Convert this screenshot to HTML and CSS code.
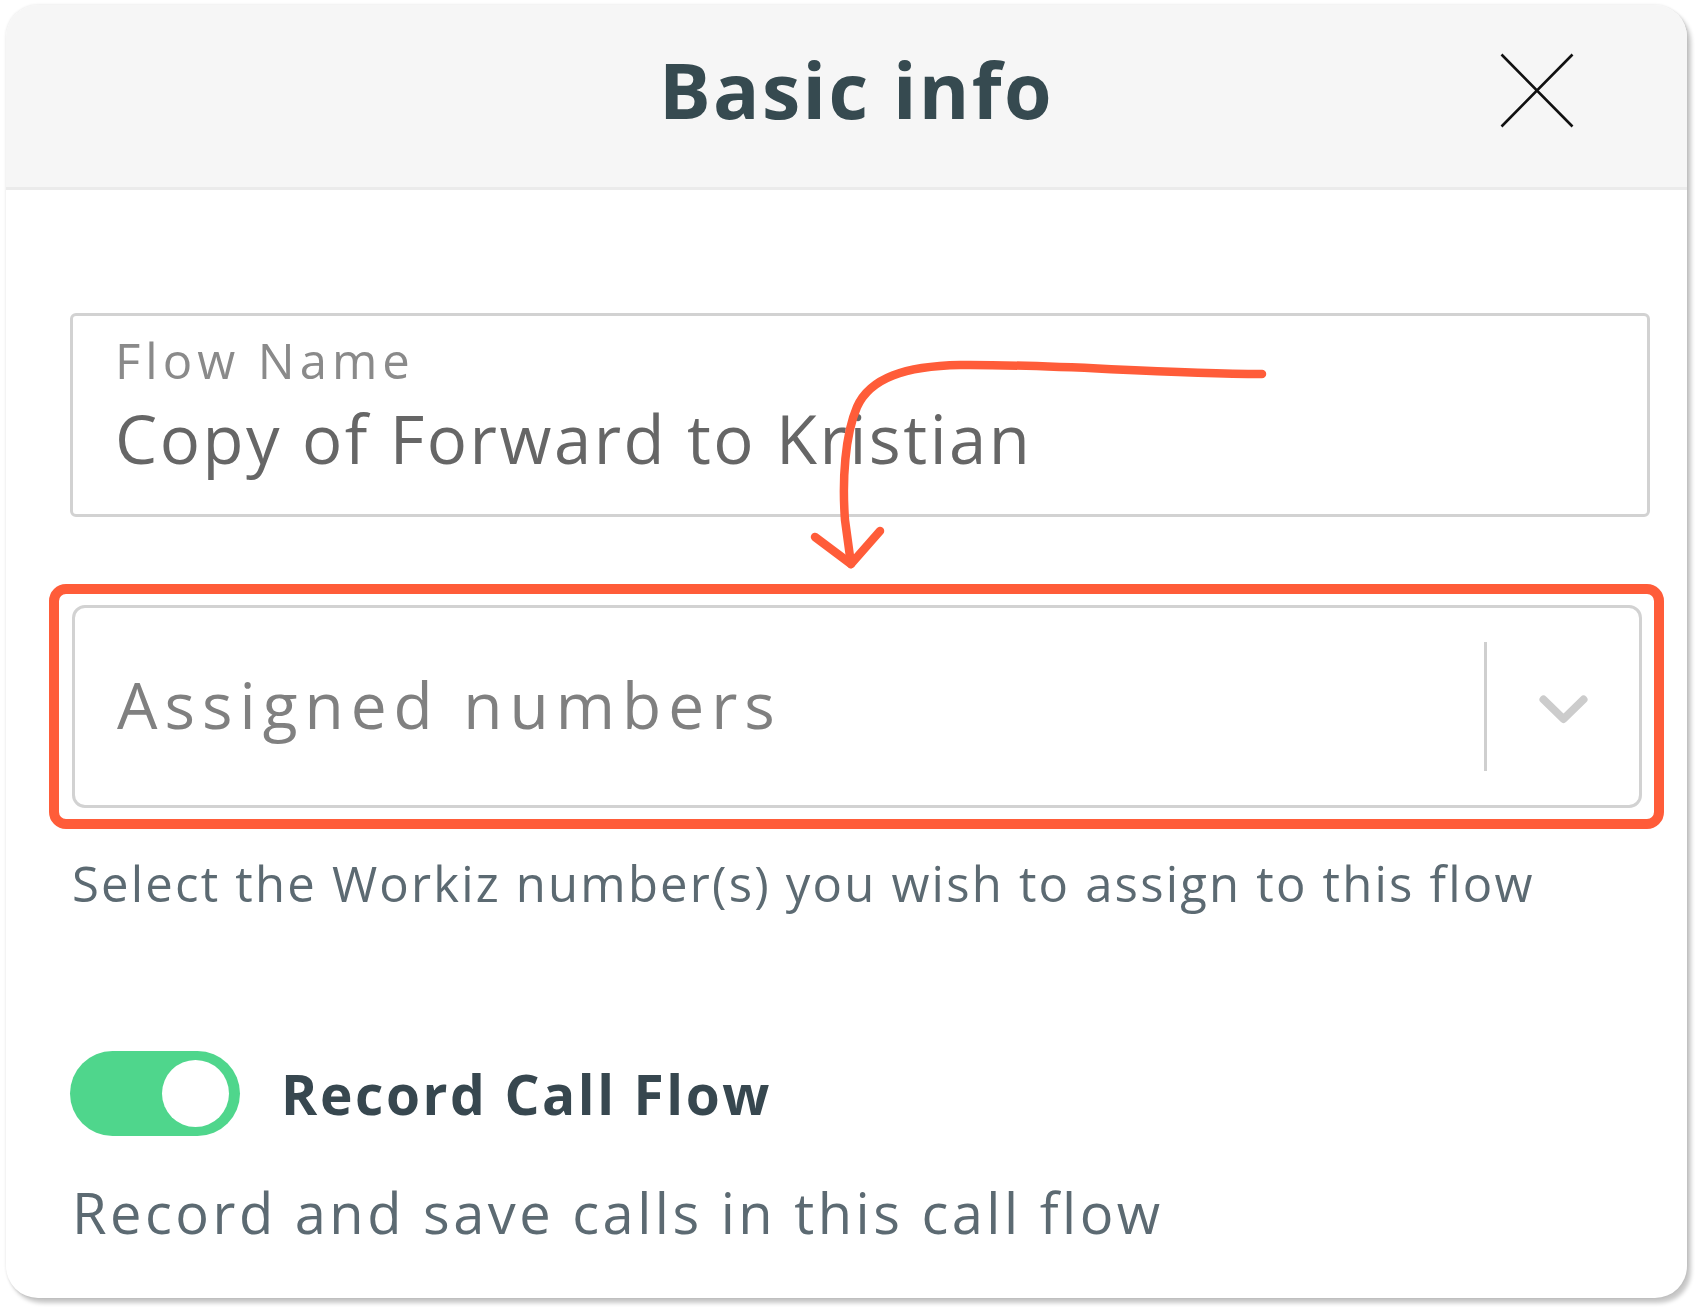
FILE: index.html
```html
<!DOCTYPE html>
<html lang="en">
<head>
<meta charset="utf-8">
<title>Basic info</title>
<link rel="stylesheet" href="styles.css">
</head>
<body>
<div class="card">
  <div class="header">
    <div class="spacer"></div>
    <h1 class="title">Basic info</h1>
    <button class="close" aria-label="Close">
      <svg width="74" height="75" viewBox="0 0 74 75"><path d="M1.5 1.5 L72.5 73.5 M72.5 1.5 L1.5 73.5" stroke="#111" stroke-width="2.6" fill="none"/></svg>
    </button>
  </div>
  <div class="body">
    <div class="field">
      <div class="field-label">Flow Name</div>
      <div class="field-value">Copy of Forward to Kristian</div>
    </div>
    <div class="highlight">
      <div class="select">
        <div class="placeholder">Assigned numbers</div>
        <div class="sep"></div>
        <div class="indicator">
          <svg width="49" height="29" viewBox="0 0 49 29"><path d="M4.5 4.5 L24.5 24 L44.5 4.5" stroke="#cccccc" stroke-width="8" fill="none" stroke-linecap="round" stroke-linejoin="round"/></svg>
        </div>
      </div>
    </div>
    <p class="helper">Select the Workiz number(s) you wish to assign to this flow</p>
    <div class="toggle-row">
      <div class="toggle"><div class="knob"></div></div>
      <div class="toggle-label">Record Call Flow</div>
    </div>
    <p class="desc">Record and save calls in this call flow</p>
  </div>
</div>
<svg class="arrow" width="1700" height="1313" viewBox="0 0 1700 1313">
  <path d="M1262 374 C1150 373 1050 364 960 365 C905 366 870 378 857 407 C845 435 842 480 845 520 L851 564" stroke="#ff5c39" stroke-width="8.5" fill="none" stroke-linecap="round" stroke-linejoin="round"/>
  <path d="M815 537 L851 564 L880 531" stroke="#ff5c39" stroke-width="8.5" fill="none" stroke-linecap="round" stroke-linejoin="round"/>
</svg>
</body>
</html>
```
FILE: styles.css
```css
html, body {
  margin: 0;
  padding: 0;
  background: #ffffff;
}
body {
  width: 1700px;
  height: 1313px;
  position: relative;
  overflow: hidden;
  font-family: "Open Sans", "Liberation Sans", sans-serif;
}
.card {
  margin: 5px 0 0 6px;
  width: 1681px;
  height: 1293px;
  box-sizing: border-box;
  background: #ffffff;
  border-radius: 32px;
  overflow: hidden;
  box-shadow: 4px 5px 4px rgba(0,0,0,0.22), 0 0 3px rgba(0,0,0,0.12);
}
.header {
  height: 185px;
  box-sizing: border-box;
  background: #f6f6f6;
  border-bottom: 3px solid #ebebeb;
  display: grid;
  grid-template-columns: 1fr auto 1fr;
  align-items: center;
  padding: 0 0 14px 20px;
}
.title {
  margin: 0;
  font-size: 77px;
  line-height: 1;
  font-weight: 700;
  letter-spacing: 2.4px;
  color: #364a50;
}
.close {
  justify-self: end;
  margin-right: 113px;
  margin-top: 2px;
  padding: 0;
  border: 0;
  background: transparent;
  display: block;
  line-height: 0;
}
.body {
  padding: 123px 37px 0 64px;
}
.field {
  height: 204px;
  box-sizing: border-box;
  border: 3px solid #d2d2d2;
  border-radius: 6px;
  padding: 20px 42px 0;
}
.field-label {
  font-size: 49px;
  line-height: 1;
  letter-spacing: 5px;
  color: #8a8a8a;
}
.field-value {
  margin-top: 20px;
  font-size: 67px;
  line-height: 1;
  letter-spacing: 2.5px;
  color: #666666;
}
.highlight {
  margin: 67px -14px 0 -21px;
  border: 10px solid #ff5c39;
  border-radius: 17px;
  padding: 11px 12px 11px 13px;
}
.select {
  height: 203px;
  box-sizing: border-box;
  border: 3px solid #d2d2d2;
  border-radius: 13px;
  display: flex;
  align-items: center;
  padding-left: 42px;
}
.placeholder {
  flex: 1;
  font-size: 64px;
  line-height: 1;
  letter-spacing: 7px;
  color: #808080;
  margin-top: -3px;
}
.sep {
  width: 3.5px;
  height: 129px;
  background: #cfcfcf;
}
.indicator {
  width: 152px;
  display: flex;
  justify-content: center;
  align-items: center;
  padding-top: 5px;
}
.helper {
  margin: 30px 0 0 2px;
  font-size: 49px;
  line-height: 1;
  letter-spacing: 2.2px;
  color: #5c6a72;
}
.toggle-row {
  margin-top: 143px;
  display: flex;
  align-items: center;
  gap: 41px;
}
.toggle {
  width: 170px;
  height: 85px;
  border-radius: 43px;
  background: #4fd68c;
  display: flex;
  align-items: center;
  justify-content: flex-end;
  padding-right: 11px;
  box-sizing: border-box;
}
.knob {
  width: 67px;
  height: 67px;
  border-radius: 50%;
  background: #ffffff;
}
.toggle-label {
  font-size: 55px;
  line-height: 1;
  font-weight: 700;
  letter-spacing: 2.6px;
  color: #37474f;
}
.desc {
  margin: 48px 0 0 2px;
  font-size: 56px;
  line-height: 1;
  letter-spacing: 3.5px;
  color: #5c6a72;
}
.arrow {
  position: absolute;
  left: 0;
  top: 0;
  pointer-events: none;
}
```
